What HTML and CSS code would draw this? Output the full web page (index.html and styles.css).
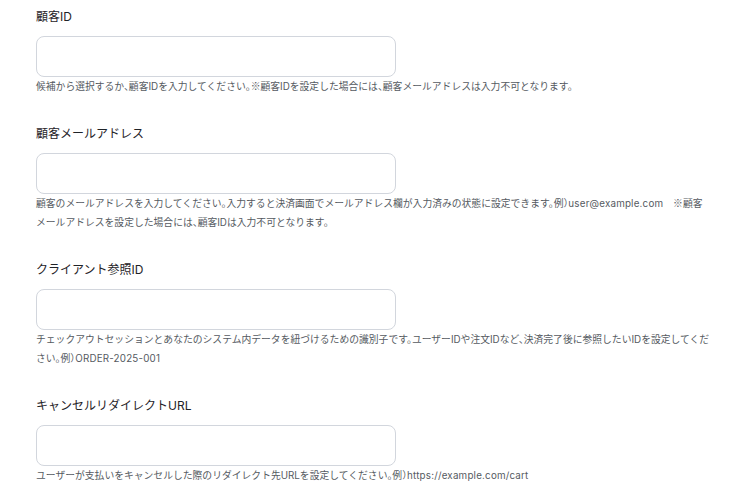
FILE: index.html
```html
<!DOCTYPE html>
<html lang="ja">
<head>
    <meta charset="UTF-8">
    <meta name="viewport" content="width=device-width, initial-scale=1.0">
    <title>チェックアウト設定</title>
    <link rel="stylesheet" href="styles.css">
</head>
<body>
    <div class="form">
        <div class="field">
            <label for="customer">顧客ID</label>
            <input type="text" id="customer" class="text-input">
            <p class="help">候補から選択するか、顧客IDを入力してください。<span class="jp">※</span>顧客IDを設定した場合には、顧客メールアドレスは入力不可となります。</p>
        </div>

        <div class="field">
            <label for="email">顧客メールアドレス</label>
            <input type="email" id="email" class="text-input">
            <p class="help">顧客のメールアドレスを入力してください。入力すると決済画面でメールアドレス欄が入力済みの状態に設定できます。例）<span class="sample">user@example.com</span>　<span class="jp">※</span>顧客メールアドレスを設定した場合には、顧客IDは入力不可となります。</p>
        </div>

        <div class="field">
            <label for="reference">クライアント参照ID</label>
            <input type="text" id="reference" class="text-input">
            <p class="help">チェックアウトセッションとあなたのシステム内データを紐づけるための識別子です。ユーザーIDや注文IDなど、決済完了後に参照したいIDを設定してください。例）<span class="sample">ORDER-2025-001</span></p>
        </div>

        <div class="field">
            <label for="cancel">キャンセルリダイレクトURL</label>
            <input type="url" id="cancel" class="text-input">
            <p class="help">ユーザーが支払いをキャンセルした際のリダイレクト先URLを設定してください。例）<span class="sample">https://example.com/cart</span></p>
        </div>
    </div>
</body>
</html>
```

FILE: styles.css
```css
body {
    margin: 0;
    font-family: Inter, 'Noto Sans CJK JP', sans-serif;
    background: #fff;
    color: #1f2328;
}

.form {
    padding: 7px 26px 0 36px;
}

.field {
    margin-bottom: 27px;
}

.field label {
    display: block;
    font-size: 12px;
    font-weight: 400;
    line-height: 20px;
    margin-bottom: 9px;
    color: #1f2328;
}

.text-input {
    display: block;
    box-sizing: border-box;
    width: 360px;
    height: 41px;
    margin: 0;
    padding: 0 12px;
    border: 1px solid #d2d6dd;
    border-radius: 8px;
    background: #fff;
    font-family: inherit;
    font-size: 12px;
}

.help {
    margin: 0;
    font-size: 9.8px;
    line-height: 19.5px;
    color: #555a61;
    font-feature-settings: "halt";
}

.sample {
    letter-spacing: 0.2px;
}

.jp {
    font-family: 'Noto Sans CJK JP', sans-serif;
    font-feature-settings: normal;
}
```
